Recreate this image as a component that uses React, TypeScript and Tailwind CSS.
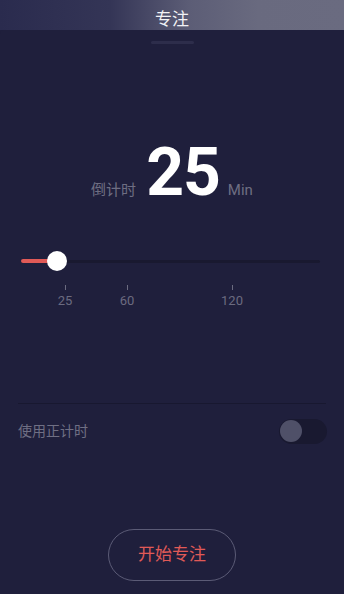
export default function App() {
  const font = { fontFamily: 'Roboto, "Noto Sans CJK SC", sans-serif' };
  return (
    <div className="w-[344px] h-[594px] overflow-hidden flex flex-col bg-[#1f1f3c]" style={font}>
      <div className="h-[30px] shrink-0 flex items-end justify-center bg-[linear-gradient(90deg,#2a2b4e_0%,#343556_32%,#5c5d76_55%,#696a7f_75%,#6a6b80_100%)]">
        <span className="text-[17px] leading-[20px] text-[#f2f2f5] mb-[1px]">专注</span>
      </div>
      <div className="flex-1 flex flex-col bg-[#1f1f3c] rounded-t-[4px]">
        <div className="flex justify-center pt-[11px]">
          <div className="w-[43px] h-[3px] rounded-full bg-[#2d2d4b]" />
        </div>
        <div className="flex items-baseline justify-center mt-[99px] h-[60px]">
          <span className="text-[15px] text-[#6e6e82] mr-[10px]">倒计时</span>
          <span className="text-[66px] leading-[60px] font-bold text-white tracking-[-1px]">25</span>
          <span className="text-[15px] text-[#6e6e82] ml-[8px]">Min</span>
        </div>
        <div className="relative mt-[48px] ml-[21px] mr-[24px] h-[20px] flex items-center">
          <div className="w-full h-[3px] rounded-full bg-[#191930]" />
          <div className="absolute left-0 top-[8px] w-[36px] h-[4px] rounded-full bg-[#e05a57]" />
          <div className="absolute left-[26px] top-0 w-[20px] h-[20px] rounded-full bg-white" />
        </div>
        <div className="relative mt-[14px] h-[30px] text-[13px] text-[#6b6b80]">
          <div className="absolute left-[65px] top-0 w-px h-[5px] bg-[#6b6b80]" />
          <div className="absolute left-[127px] top-0 w-px h-[5px] bg-[#6b6b80]" />
          <div className="absolute left-[232px] top-0 w-px h-[5px] bg-[#6b6b80]" />
          <span className="absolute left-[65px] top-[6px] -translate-x-1/2">25</span>
          <span className="absolute left-[127px] top-[6px] -translate-x-1/2">60</span>
          <span className="absolute left-[232px] top-[6px] -translate-x-1/2">120</span>
        </div>
        <div className="mx-[18px] mt-[88px] h-px bg-[#181830]" />
        <div className="flex items-center justify-between mx-[18px] mt-[14px] h-[26px]">
          <span className="text-[14px] text-[#6f6f84]">使用正计时</span>
          <div className="w-[48px] h-[25px] rounded-full bg-[#191930] flex items-center px-[1px] mr-[-1px]">
            <div className="w-[22px] h-[22px] rounded-full bg-[#4f5068]" />
          </div>
        </div>
        <div className="flex justify-center mt-[85px]">
          <div className="w-[128px] h-[52px] rounded-full border border-[#5b5b76] flex items-center justify-center">
            <span className="text-[17px] text-[#e05a57]">开始专注</span>
          </div>
        </div>
      </div>
    </div>
  );
}
